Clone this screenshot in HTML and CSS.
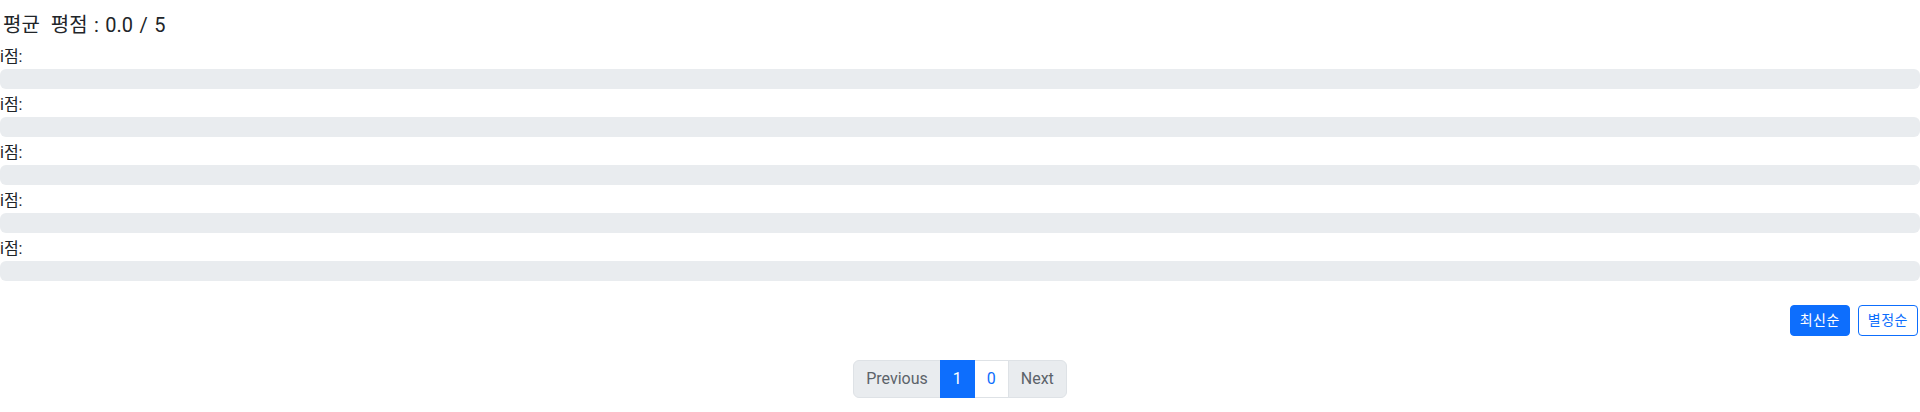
FILE: index.html
```html
<!DOCTYPE html>
<html lang="ko">
<head>
<meta charset="utf-8">
<title>리뷰</title>
<link rel="stylesheet" href="styles.css">
</head>
<body>
<div class="review">
  <h5 class="avg"><span class="avg-label">평균 평점</span> : 0.0 / 5</h5>
  <ul class="dist">
    <li class="dist-row"><div class="dist-label">i점:</div><div class="progress"><div class="progress-bar" style="width:0%"></div></div></li>
    <li class="dist-row"><div class="dist-label">i점:</div><div class="progress"><div class="progress-bar" style="width:0%"></div></div></li>
    <li class="dist-row"><div class="dist-label">i점:</div><div class="progress"><div class="progress-bar" style="width:0%"></div></div></li>
    <li class="dist-row"><div class="dist-label">i점:</div><div class="progress"><div class="progress-bar" style="width:0%"></div></div></li>
    <li class="dist-row"><div class="dist-label">i점:</div><div class="progress"><div class="progress-bar" style="width:0%"></div></div></li>
  </ul>
  <div class="sort">
    <button class="btn btn-primary" type="button">최신순</button>
    <button class="btn btn-outline" type="button">별정순</button>
  </div>
  <nav class="pager">
    <ul class="pagination">
      <li class="page-item disabled"><span class="page-link">Previous</span></li>
      <li class="page-item active"><span class="page-link">1</span></li>
      <li class="page-item"><span class="page-link">0</span></li>
      <li class="page-item disabled"><span class="page-link">Next</span></li>
    </ul>
  </nav>
</div>
</body>
</html>
```
FILE: styles.css
```css
* { box-sizing: border-box; }
html, body { margin: 0; padding: 0; background: #fff; }
body {
  font-family: Roboto, "Noto Sans CJK KR", sans-serif;
  font-size: 16px;
  line-height: 24px;
  color: #212529;
}
.review { padding-top: 13px; }
.avg {
  margin: 0 0 8px 3px;
  font-size: 20px;
  line-height: 24px;
  font-weight: 400;
  word-spacing: 1.5px;
}
.avg-label { word-spacing: 6px; }
.dist { list-style: none; margin: 0; padding: 0; }
.dist-row { margin-bottom: 4px; }
.dist-label { height: 24px; }
.progress {
  height: 20px;
  background: #e9ecef;
  border-radius: 6px;
  overflow: hidden;
}
.progress-bar { height: 100%; background: #0d6efd; }
.sort {
  margin-top: 24px;
  padding-right: 2px;
  display: flex;
  justify-content: flex-end;
  gap: 8px;
}
.btn {
  font-family: inherit;
  font-size: 14px;
  line-height: 21px;
  padding: 4px 9px;
  letter-spacing: 0.5px;
  border-radius: 4px;
  border: 1px solid #0d6efd;
  cursor: pointer;
  height: 31px;
}
.btn-primary { background: #0d6efd; color: #fff; }
.btn-outline { background: #fff; color: #0d6efd; }
.pager { margin-top: 24px; display: flex; justify-content: center; }
.pagination {
  display: flex;
  list-style: none;
  margin: 0;
  padding: 0;
}
.page-link {
  display: block;
  padding: 7px 12px;
  line-height: 22px;
  border: 1px solid #dee2e6;
  color: #0d6efd;
  background: #fff;
}
.page-item + .page-item .page-link { margin-left: -1px; }
.page-item:first-child .page-link { border-radius: 6px 0 0 6px; }
.page-item:last-child .page-link { border-radius: 0 6px 6px 0; }
.page-item.disabled .page-link { color: #5c636a; background: #e9ecef; }
.page-item.active .page-link { background: #0d6efd; border-color: #0d6efd; color: #fff; position: relative; }
```
